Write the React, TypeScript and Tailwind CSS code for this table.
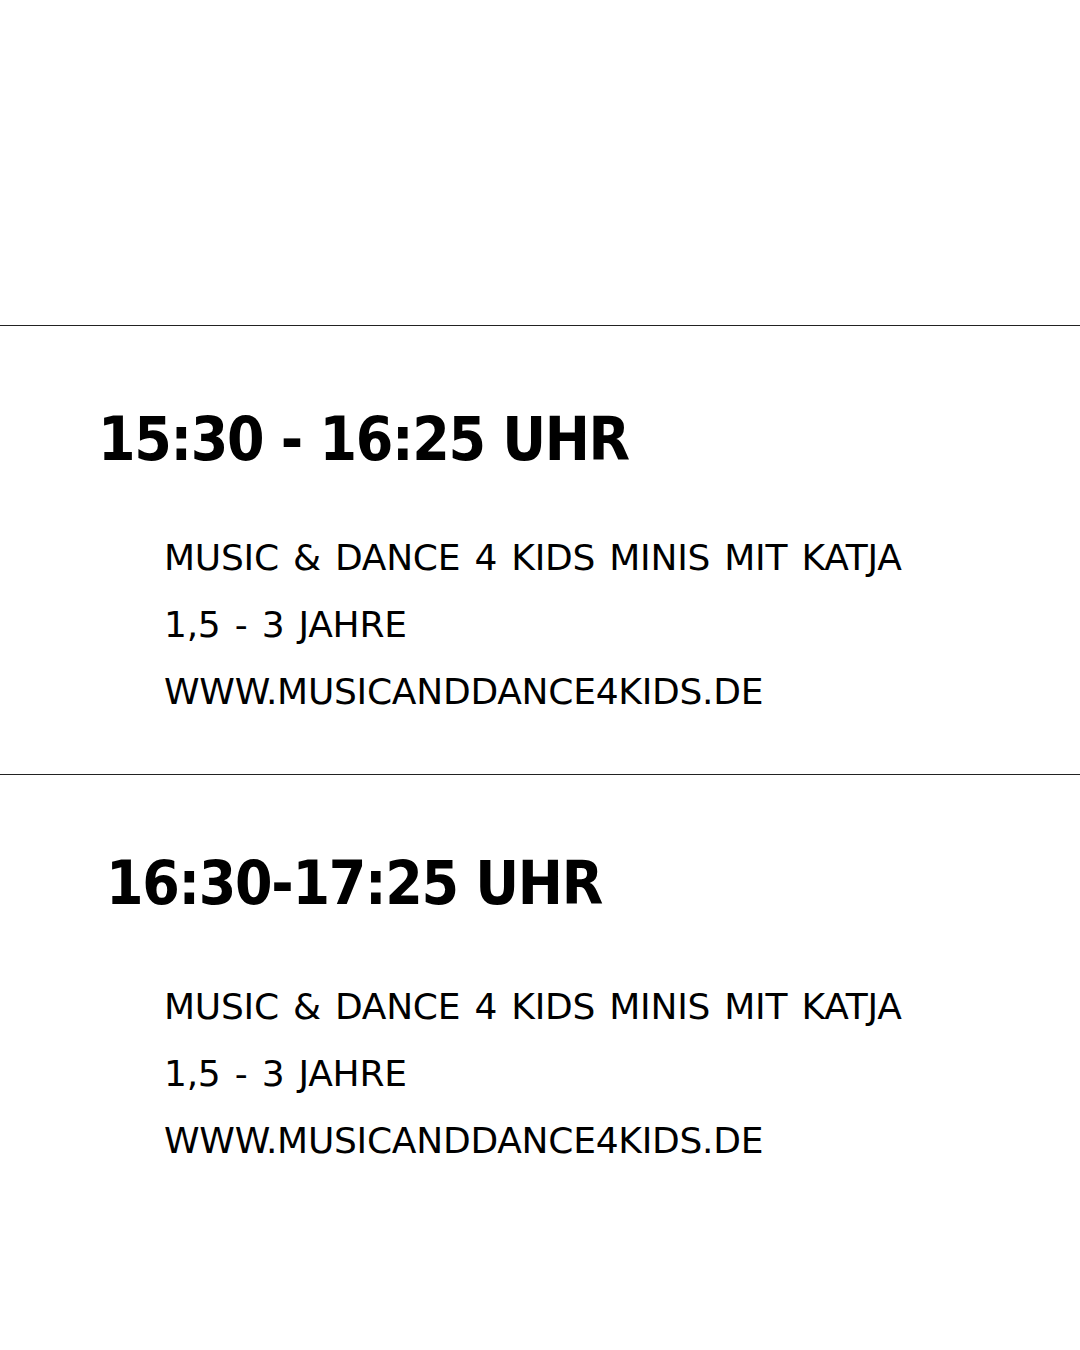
const slots = [
  { time: "15:30 - 16:25 UHR", head: "pl-[98px] pt-[63px]", body: "pt-[35px]" },
  { time: "16:30-17:25 UHR", head: "pl-[106px] pt-[58px]", body: "pt-[40px]" },
];

const headFont = { fontFamily: '"DejaVu Sans Condensed", "DejaVu Sans", sans-serif' };
const bodyFont = { fontFamily: '"DejaVu Sans", Verdana, sans-serif' };

export default function App() {
  return (
    <div className="w-[1080px] h-[1350px] bg-white text-black overflow-hidden">
      <div className="h-[325px]" />
      {slots.map((s, i) => (
        <div key={i} className="border-t border-[#222] h-[449px]">
          <h2 className={`${s.head} text-[60px] leading-[100px] font-bold tracking-[-1.3px]`} style={headFont}>
            {s.time}
          </h2>
          <div
            className={`pl-[164px] ${s.body} text-[36px] leading-[67px] tracking-[-0.25px] [word-spacing:3px]`}
            style={bodyFont}
          >
            <p>MUSIC &amp; DANCE 4 KIDS MINIS MIT KATJA</p>
            <p>1,5 - 3 JAHRE</p>
            <p>WWW.MUSICANDDANCE4KIDS.DE</p>
          </div>
        </div>
      ))}
    </div>
  );
}
